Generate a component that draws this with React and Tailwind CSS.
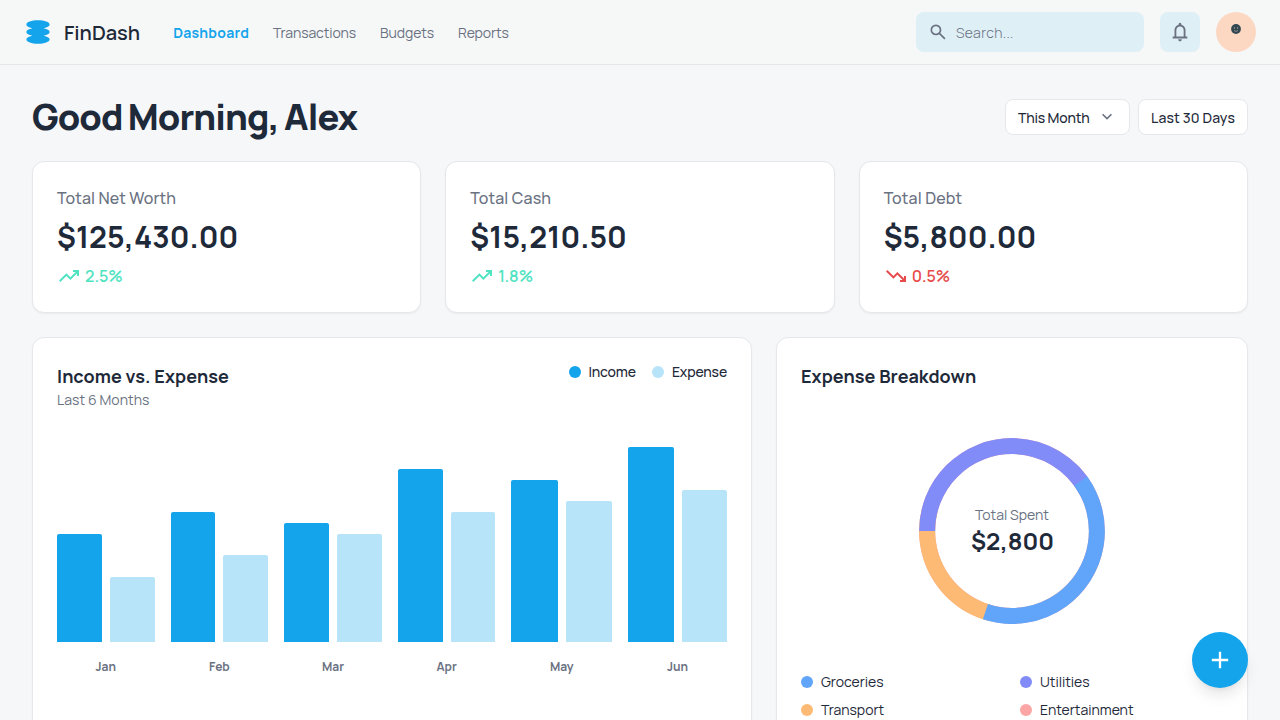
const ICONS = {
  search: 'M784-120 532-372q-30 24-69 38t-83 14q-109 0-184.5-75.5T120-580q0-109 75.5-184.5T380-840q109 0 184.5 75.5T640-580q0 44-14 83t-38 69l252 252-56 56ZM380-400q75 0 127.5-52.5T560-580q0-75-52.5-127.5T380-760q-75 0-127.5 52.5T200-580q0 75 52.5 127.5T380-400Z',
  bell: 'M160-200v-80h80v-280q0-83 50-147.5T420-792v-28q0-25 17.5-42.5T480-880q25 0 42.5 17.5T540-820v28q80 20 130 84.5T720-560v280h80v80H160Zm320-300Zm0 420q-33 0-56.5-23.5T400-160h160q0 33-23.5 56.5T480-80ZM320-280h320v-280q0-66-47-113t-113-47q-66 0-113 47t-47 113v280Z',
  up: 'm136-240-56-56 296-298 160 160 208-206H640v-80h240v240h-80v-104L536-320 376-480 136-240Z',
  down: 'M640-240v-80h104L536-526 376-366 80-664l56-56 240 240 160-160 264 264v-104h80v240H640Z',
  chevron: 'M480-344 240-584l56-56 184 184 184-184 56 56-240 240Z',
  plus: 'M440-440H200v-80h240v-240h80v240h240v80H520v240h-80v-240Z',
};

function Icon({ name, className }) {
  return (
    <svg viewBox="0 -960 960 960" fill="currentColor" className={className} aria-hidden="true">
      <path d={ICONS[name]} />
    </svg>
  );
}

const NAV = ['Transactions', 'Budgets', 'Reports'];

const STATS = [
  { label: 'Total Net Worth', value: '$125,430.00', change: '2.5%', trend: 'up' },
  { label: 'Total Cash', value: '$15,210.50', change: '1.8%', trend: 'up' },
  { label: 'Total Debt', value: '$5,800.00', change: '0.5%', trend: 'down' },
];

const MONTHS = [
  { name: 'Jan', income: 50, expense: 30 },
  { name: 'Feb', income: 60, expense: 40 },
  { name: 'Mar', income: 55, expense: 50 },
  { name: 'Apr', income: 80, expense: 60 },
  { name: 'May', income: 75, expense: 65 },
  { name: 'Jun', income: 90, expense: 70 },
];

const CATEGORIES = [
  { name: 'Groceries', dot: 'bg-[#60a5fa]' },
  { name: 'Utilities', dot: 'bg-[#818cf8]' },
  { name: 'Transport', dot: 'bg-[#fdba74]' },
  { name: 'Entertainment', dot: 'bg-[#fca5a5]' },
];

function Header() {
  return (
    <header className="flex h-[65px] shrink-0 items-center justify-between border-b border-gray-200 bg-[#f6f8f8] px-6">
      <div className="flex items-center gap-[33px]">
        <div className="flex items-center gap-3">
          <svg viewBox="0 0 48 48" className="size-7 text-[#13a4ec]" fill="currentColor" aria-hidden="true">
            <path d="M44 11.2727C44 14.0109 39.8386 16.3957 33.69 17.6364C39.8386 18.877 44 21.2618 44 24C44 26.7382 39.8386 29.123 33.69 30.3636C39.8386 31.6043 44 33.9891 44 36.7273C44 40.7439 35.0457 44 24 44C12.9543 44 4 40.7439 4 36.7273C4 33.9891 8.16144 31.6043 14.31 30.3636C8.16144 29.123 4 26.7382 4 24C4 21.2618 8.16144 18.877 14.31 17.6364C8.16144 16.3957 4 14.0109 4 11.2727C4 7.25611 12.9543 4 24 4C35.0457 4 44 7.25611 44 11.2727Z" />
          </svg>
          <span className="pt-0.5 text-xl font-semibold">FinDash</span>
        </div>
        <nav className="flex items-center gap-6 pt-0.5 text-sm text-gray-500">
          <a className="font-bold tracking-[0.25px] text-[#13a4ec]">Dashboard</a>
          {NAV.map((n) => (
            <a key={n} className="tracking-[-0.1px]">{n}</a>
          ))}
        </nav>
      </div>
      <div className="flex items-center gap-4">
        <div className="flex h-10 w-[228px] items-center rounded-lg bg-[#dfeff6] text-gray-500">
          <Icon name="search" className="ml-3 size-5" />
          <span className="pt-0.5 pl-2 text-sm font-light tracking-[0.35px]">Search...</span>
        </div>
        <button className="flex size-10 items-center justify-center rounded-lg bg-[#dfeff6] text-gray-500">
          <Icon name="bell" className="size-[22px]" />
        </button>
        <div className="flex size-10 justify-center rounded-full bg-[#fcd8c3] pt-3">
          <svg viewBox="0 0 10 10" className="size-2.5" aria-hidden="true">
            <circle cx="5" cy="5" r="4.9" fill="#2f4650" />
            <circle cx="3.4" cy="3.9" r="0.6" fill="#c9b5a8" />
            <circle cx="6.6" cy="3.9" r="0.6" fill="#c9b5a8" />
            <path d="M3 6.5Q5 8.3 7 6.5" fill="none" stroke="#b9a89e" strokeWidth="0.7" />
          </svg>
        </div>
      </div>
    </header>
  );
}

function StatCard({ label, value, change, trend }) {
  return (
    <section className="flex flex-col gap-2 rounded-xl border border-gray-200 bg-white p-6 shadow-xs">
      <p className="text-base font-medium tracking-[0.13px] text-gray-500">{label}</p>
      <p className="text-3xl leading-[38px] font-bold tracking-[0.07px]">{value}</p>
      <div className={`flex items-center gap-1 ${trend === 'up' ? 'text-[#50e3c2]' : 'text-[#e74c4c]'}`}>
        <Icon name={trend} className="size-6" />
        <span className="text-base font-semibold">{change}</span>
      </div>
    </section>
  );
}

function BarChart() {
  return (
    <section className="col-span-3 rounded-xl border border-gray-200 bg-white p-6 shadow-xs">
      <div className="flex items-start justify-between">
        <div>
          <h2 className="text-lg font-bold tracking-[0.1px]">Income vs. Expense</h2>
          <p className="text-sm tracking-[0.05px] text-gray-500">Last 6 Months</p>
        </div>
        <div className="flex gap-4 text-sm font-medium tracking-[-0.15px]">
          <div className="flex items-center gap-2">
            <span className="size-3 rounded-full bg-[#13a4ec]" />
            Income
          </div>
          <div className="flex items-center gap-2">
            <span className="size-3 rounded-full bg-[#b8e4f9]" />
            Expense
          </div>
        </div>
      </div>
      <div className="mt-[15.6px] grid grid-cols-[97.6px_97.6px_97.6px_97.6px_100.8px_98.8px] gap-x-4">
        {MONTHS.map((m) => (
          <div key={m.name} className="flex flex-col gap-[17px]">
            <div className="flex h-[216px] items-end gap-2">
              <div className="flex-1 rounded-t-xs bg-[#13a4ec]" style={{ height: `${m.income}%` }} />
              <div className="flex-1 rounded-t-xs bg-[#b8e4f9]" style={{ height: `${m.expense}%` }} />
            </div>
            <p className="text-center text-xs font-bold text-gray-500">{m.name}</p>
          </div>
        ))}
      </div>
    </section>
  );
}

// Arc lengths and offsets are percentages of the ring, measured clockwise from twelve o'clock.
const ARCS = [
  { color: '#fca5a5', length: 100, start: 0 },
  { color: '#fdba74', length: 25, start: 54 },
  { color: '#818cf8', length: 42, start: 75 },
  { color: '#60a5fa', length: 40, start: 15 },
];

function Breakdown() {
  return (
    <section className="col-span-2 rounded-xl border border-gray-200 bg-white p-6 shadow-xs">
      <h2 className="text-lg font-bold tracking-[0.07px]">Expense Breakdown</h2>
      <div className="mt-[45px] grid place-items-center">
        <svg viewBox="0 0 36 36" className="col-start-1 row-start-1 size-48" fill="none" strokeWidth="3">
          {ARCS.map((a) => (
            <circle
              key={a.color}
              cx="18"
              cy="18"
              r="15.9155"
              stroke={a.color}
              strokeDasharray={`${a.length} ${100 - a.length}`}
              transform={`rotate(${a.start * 3.6 - 90} 18 18)`}
            />
          ))}
        </svg>
        <div className="col-start-1 row-start-1 text-center">
          <p className="text-sm text-gray-500">Total Spent</p>
          <p className="pl-px text-2xl font-bold">$2,800</p>
        </div>
      </div>
      <div className="mt-[45px] grid grid-cols-2 gap-x-4 gap-y-2 text-sm">
        {CATEGORIES.map((c) => (
          <div key={c.name} className="flex items-center gap-2">
            <span className={`size-3 rounded-full ${c.dot}`} />
            {c.name}
          </div>
        ))}
      </div>
    </section>
  );
}

export default function App() {
  return (
    <div className="flex h-screen flex-col overflow-hidden bg-[#f5f7f9] font-['Manrope','Inter',sans-serif] text-gray-800">
      <Header />
      <main className="flex min-h-0 flex-1 flex-col px-8 pt-8">
        <div className="flex h-10 shrink-0 items-center justify-between">
          <h1 className="text-4xl font-extrabold tracking-[-0.95px] [word-spacing:-1px]">Good Morning, Alex</h1>
          <div className="flex gap-2 text-sm font-medium">
            <button className="flex h-9 w-[125px] items-center gap-[7px] rounded-lg border border-gray-200 bg-white px-3">
              <span className="pt-0.5 tracking-[-0.2px] whitespace-nowrap">This Month</span>
              <Icon name="chevron" className="size-5 shrink-0 text-gray-500" />
            </button>
            <button className="flex h-9 w-[110px] items-center rounded-lg border border-gray-200 bg-white px-3 pt-0.5 tracking-[0.13px] whitespace-nowrap">
              Last 30 Days
            </button>
          </div>
        </div>
        <div className="mt-6 grid shrink-0 grid-cols-3 gap-6">
          {STATS.map((s) => (
            <StatCard key={s.label} {...s} />
          ))}
        </div>
        <div className="mt-6 grid h-[480px] shrink-0 grid-cols-5 gap-6">
          <BarChart />
          <Breakdown />
        </div>
      </main>
      <button className="fixed right-8 bottom-8 flex size-14 items-center justify-center rounded-full bg-[#13a4ec] text-white shadow-lg">
        <Icon name="plus" className="size-7" />
      </button>
    </div>
  );
}
